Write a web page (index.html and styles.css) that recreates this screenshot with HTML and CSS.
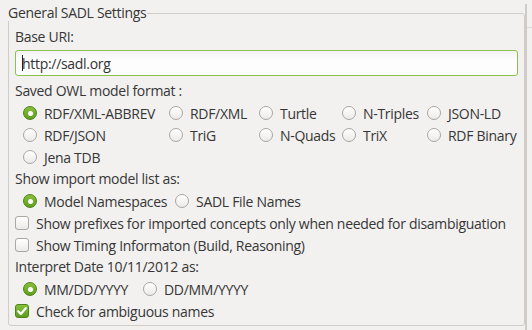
FILE: index.html
```html
<!DOCTYPE html>
<html lang="en">
<head>
    <meta charset="UTF-8">
    <title>SADL Preferences</title>
    <link rel="stylesheet" href="styles.css">
</head>
<body>
    <div class="page">
        <fieldset class="group">
            <legend>General SADL Settings</legend>
            <div class="label">Base URI:</div>
            <div class="text-field"><span class="caret"></span>http://sadl.org</div>

            <div class="label">Saved OWL model format :</div>
            <div class="radio-grid">
                <label class="radio checked"><span class="dot"></span>RDF/XML-ABBREV</label>
                <label class="radio"><span class="dot"></span>RDF/XML</label>
                <label class="radio"><span class="dot"></span>Turtle</label>
                <label class="radio"><span class="dot"></span>N-Triples</label>
                <label class="radio"><span class="dot"></span>JSON-LD</label>
                <label class="radio"><span class="dot"></span>RDF/JSON</label>
                <label class="radio"><span class="dot"></span>TriG</label>
                <label class="radio"><span class="dot"></span>N-Quads</label>
                <label class="radio"><span class="dot"></span>TriX</label>
                <label class="radio"><span class="dot"></span>RDF Binary</label>
                <label class="radio"><span class="dot"></span>Jena TDB</label>
            </div>

            <div class="label">Show import model list as:</div>
            <div class="radio-row imports">
                <label class="radio checked"><span class="dot"></span>Model Namespaces</label>
                <label class="radio"><span class="dot"></span>SADL File Names</label>
            </div>

            <label class="check"><span class="box"></span>Show prefixes for imported concepts only when needed for disambiguation</label>
            <label class="check"><span class="box"></span>Show Timing Informaton (Build, Reasoning)</label>

            <div class="label">Interpret Date 10/11/2012 as:</div>
            <div class="radio-row dates">
                <label class="radio checked"><span class="dot"></span>MM/DD/YYYY</label>
                <label class="radio"><span class="dot"></span>DD/MM/YYYY</label>
            </div>

            <label class="check checked">
                <span class="box">
                    <svg width="14" height="14" viewBox="0 0 14 14"><path d="M3.2 7.3 L5.8 9.9 L10.8 4.2" fill="none" stroke="#fff" stroke-width="2.2" stroke-linecap="round" stroke-linejoin="round"/></svg>
                </span>
                Check for ambiguous names
            </label>
        </fieldset>
        <div class="side">
            <div class="side-head"></div>
        </div>
    </div>
</body>
</html>
```

FILE: styles.css
```css
:root{
    --bg: #f2f1f0;
    --text: #363636;
    --frame: #d0cdc9;
    --green: #5f9d1e;
    --green-dark: #4b8412;
}
body{
    margin: 0;
    height: 330px;
    overflow: hidden;
    background-color: var(--bg);
    color: var(--text);
    font-family: "Open Sans", sans-serif;
    font-size: 14px;
    letter-spacing: -0.3px;
}
.page{
    display: flex;
    height: 330px;
}
.group{
    box-sizing: border-box;
    width: 517px;
    height: 321px;
    margin: 5px 0 0 8px;
    padding: 5px 6px 0;
    border: 1px solid var(--frame);
    border-radius: 3px;
    min-width: 0;
}
.group legend{
    padding: 0 1px 0 0;
    margin-left: -7px;
    line-height: 16px;
}
.label{
    line-height: 22px;
}
.text-field{
    box-sizing: border-box;
    height: 26px;
    margin: 2px 0 4px;
    padding-left: 6px;
    display: flex;
    align-items: center;
    border: 1px solid #8cc04e;
    border-radius: 3px;
    background: linear-gradient(#f3f3f3, #fdfdfd 40%);
    color: #333;
}
.caret{
    width: 1px;
    height: 16px;
    background-color: #222;
    margin-right: -1px;
}
.radio-grid{
    margin-left: 8px;
    display: grid;
    grid-template-columns: 146px 90px 83px 85px auto;
    grid-auto-rows: 22px;
}
.radio-row{
    margin-left: 8px;
    display: grid;
    height: 22px;
}
.imports{
    grid-template-columns: 152px auto;
}
.dates{
    grid-template-columns: 120px auto;
}
.radio,.check{
    display: flex;
    align-items: center;
    gap: 7px;
    white-space: nowrap;
}
.check{
    height: 22px;
}
.dot{
    box-sizing: border-box;
    flex: none;
    width: 14px;
    height: 14px;
    border-radius: 50%;
    border: 1px solid #aba7a2;
    background: linear-gradient(#ffffff, #ebeae8);
    display: flex;
    align-items: center;
    justify-content: center;
}
.radio.checked .dot{
    border-color: var(--green-dark);
    background: linear-gradient(#86c03c, var(--green));
}
.radio.checked .dot::after{
    content: "";
    width: 5px;
    height: 5px;
    border-radius: 50%;
    background-color: #fff;
}
.box{
    box-sizing: border-box;
    flex: none;
    width: 14px;
    height: 14px;
    border-radius: 3px;
    border: 1px solid #aba7a2;
    background: linear-gradient(#ffffff, #ebeae8);
    display: flex;
    align-items: center;
    justify-content: center;
}
.check.checked .box{
    border-color: var(--green-dark);
    background: linear-gradient(#86c03c, var(--green));
}
.box svg{
    display: block;
    flex: none;
}
.side{
    flex: 1;
    margin-top: 4px;
    border-left: 2px solid #cfccc8;
}
.side-head{
    height: 23px;
    border-bottom: 1px solid #dcdad6;
}
```
